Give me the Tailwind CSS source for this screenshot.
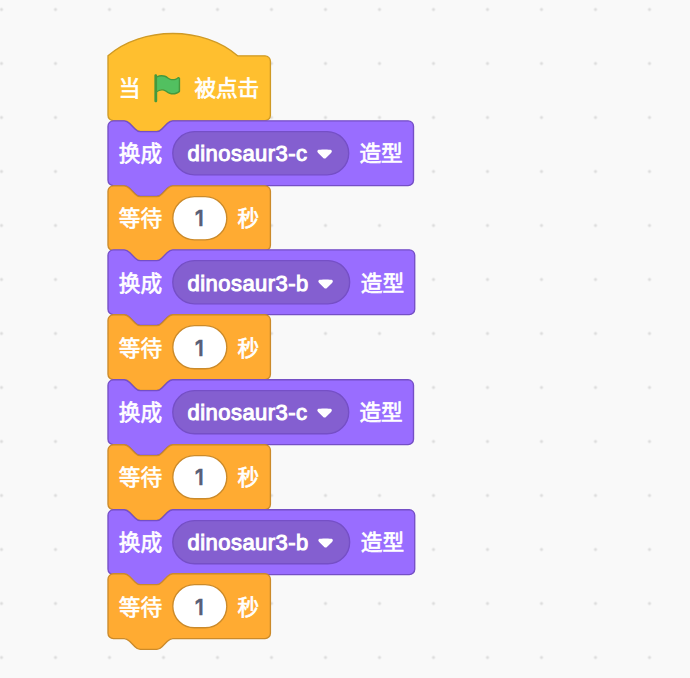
<!DOCTYPE html>
<html lang="zh-CN">
<head>
<meta charset="utf-8">
<title>积木</title>
<script src="https://cdn.jsdelivr.net/npm/@tailwindcss/browser@4"></script>
</head>
<body class="h-[678px] w-[690px] overflow-hidden bg-[#f9f9f9] bg-[radial-gradient(circle_at_center,#dddddd_1px,transparent_2px)] bg-[length:54px_54px] bg-[position:-25.5px_-17.5px] font-['Liberation_Sans','Noto_Sans_CJK_SC',sans-serif] text-[21.6px] leading-[32px] text-white [-webkit-text-stroke:0.7px_currentColor]">

<svg width="0" height="0" class="absolute">
  <defs>
    <path id="hat" d="M0,0c25,-22 71,-22 96,0H116.3a4,4 0 0 1 4,4v40a4,4 0 0 1 -4,4H48c-2,0 -3,1 -4,2l-4,4c-1,1 -2,2 -4,2h-12c-2,0 -3,-1 -4,-2l-4,-4c-1,-1 -2,-2 -4,-2H4a4,4 0 0 1 -4,-4z" fill="#ffbf2f" stroke="#cf9a25"/>
    <g id="wait">
      <path d="M0,4A4,4 0 0 1 4,0H12c2,0 3,1 4,2l4,4c1,1 2,2 4,2h12c2,0 3,-1 4,-2l4,-4c1,-1 2,-2 4,-2H116.3a4,4 0 0 1 4,4v40a4,4 0 0 1 -4,4H48c-2,0 -3,1 -4,2l-4,4c-1,1 -2,2 -4,2h-12c-2,0 -3,-1 -4,-2l-4,-4c-1,-1 -2,-2 -4,-2H4a4,4 0 0 1 -4,-4z" fill="#ffab32" stroke="#cb8a2a"/>
      <rect x="48" y="8" width="40" height="32" rx="16" fill="#fff" stroke="#cb8a2a"/>
    </g>
    <g id="costume-c" stroke="#754fc6">
      <path d="M0,4A4,4 0 0 1 4,0H12c2,0 3,1 4,2l4,4c1,1 2,2 4,2h12c2,0 3,-1 4,-2l4,-4c1,-1 2,-2 4,-2H222.3a4,4 0 0 1 4,4v40a4,4 0 0 1 -4,4H48c-2,0 -3,1 -4,2l-4,4c-1,1 -2,2 -4,2h-12c-2,0 -3,-1 -4,-2l-4,-4c-1,-1 -2,-2 -4,-2H4a4,4 0 0 1 -4,-4z" fill="#996dff"/>
      <rect x="48" y="8" width="130.3" height="32" rx="16" fill="#845fd0"/>
    </g>
    <g id="costume-b" stroke="#754fc6">
      <path d="M0,4A4,4 0 0 1 4,0H12c2,0 3,1 4,2l4,4c1,1 2,2 4,2h12c2,0 3,-1 4,-2l4,-4c1,-1 2,-2 4,-2H223.2a4,4 0 0 1 4,4v40a4,4 0 0 1 -4,4H48c-2,0 -3,1 -4,2l-4,4c-1,1 -2,2 -4,2h-12c-2,0 -3,-1 -4,-2l-4,-4c-1,-1 -2,-2 -4,-2H4a4,4 0 0 1 -4,-4z" fill="#996dff"/>
      <rect x="48" y="8" width="131" height="32" rx="16" fill="#845fd0"/>
    </g>
    <symbol id="arrow" viewBox="0 0 12.71 8.79">
      <path fill="#fff" d="M6.36,7.79a1.43,1.43,0,0,1-1-.42L1.42,3.45a1.44,1.44,0,0,1,0-2c.56-.56,9.31-.56,9.87,0a1.44,1.44,0,0,1,0,2L7.37,7.37A1.43,1.43,0,0,1,6.36,7.79Z"/>
    </symbol>
  </defs>
</svg>

<main class="flex flex-col pl-[108px] pt-[56px]">
  <section class="relative isolate flex h-[64.8px] items-center pl-[10.8px] pt-[1px]">
    <svg class="absolute left-0 top-0 -z-10 overflow-visible" width="163" height="65"><use href="#hat" transform="translate(0 -.2) scale(1.35)"/></svg>
    <span class="w-[32.4px] pt-px">当</span>
    <svg class="w-[32.4px] h-[32.4px] shrink-0 -translate-y-[0.8px]" viewBox="0 0 24 24">
      <path fill="#52c060" d="M3.6 3.7C6.5 2 9.9 2.1 12.5 4.2C15 6.2 17.9 6.1 20.4 4.2L21 4.7V14.3C18.3 16.5 14.4 16.5 11.6 14.4C9.2 12.6 6.6 12.6 3.6 14.4Z"/>
      <path fill="#45993d" d="M20.8 3.7c-.4-.2-.9-.1-1.2.2-2 1.6-4.8 1.6-6.8 0-2.3-1.9-5.6-2.3-8.3-1v-.4c0-.6-.5-1-1-1s-1 .4-1 1v18.8c0 .5.5 1 1 1h.1c.5 0 1-.4 1-1v-6.4c1-.7 2.1-1.2 3.4-1.3 1.2 0 2.4.4 3.4 1.2 2.9 2.3 7 2.3 9.8 0 .3-.2.4-.5.4-.9V4.7c0-.5-.3-.9-.8-1zm-.3 10.2C18 16 14.4 16 11.9 14c-1.1-.9-2.5-1.4-4-1.4-1.2.1-2.3.5-3.4 1.1V4c2.5-1.4 5.5-1.1 7.7.6 2.4 1.9 5.7 1.9 8.1 0h.2l.1.1-.1 9.2z"/>
    </svg>
    <span class="ml-[10.8px] pt-px">被点击</span>
  </section>

  <section class="relative isolate flex h-[64.8px] items-center pl-[10.8px] pt-[2px]">
    <svg class="absolute left-0 top-0 -z-10 overflow-visible" width="306" height="65"><use href="#costume-c" transform="translate(0 -.2) scale(1.35)"/></svg>
    <span class="w-[54px]">换成</span>
    <span class="flex w-[175.9px] items-center justify-between pl-[14.8px] pr-[15.9px]"><span class="text-[22px] tracking-[0.45px] [-webkit-text-stroke:1px_currentColor]">dinosaur3-c</span><svg class="h-[11.9px] w-[17.2px]"><use href="#arrow"/></svg></span>
    <span class="ml-[10.8px]">造型</span>
  </section>

  <section class="relative isolate flex h-[64.8px] items-center pl-[10.8px] pt-[2px]">
    <svg class="absolute left-0 top-0 -z-10 overflow-visible" width="163" height="65"><use href="#wait" transform="translate(0 -.2) scale(1.35)"/></svg>
    <span class="w-[54px]">等待</span>
    <span class="w-[53px] text-center font-[Inter,sans-serif] text-[21px] font-medium text-[#575e75]">1</span>
    <span class="ml-[11.8px]">秒</span>
  </section>

  <section class="relative isolate flex h-[64.8px] items-center pl-[10.8px] pt-[2px]">
    <svg class="absolute left-0 top-0 -z-10 overflow-visible" width="307" height="65"><use href="#costume-b" transform="translate(0 -.2) scale(1.35)"/></svg>
    <span class="w-[54px]">换成</span>
    <span class="flex w-[177.2px] items-center justify-between pl-[14.8px] pr-[15.9px]"><span class="text-[22px] tracking-[0.45px] [-webkit-text-stroke:1px_currentColor]">dinosaur3-b</span><svg class="h-[11.9px] w-[17.2px]"><use href="#arrow"/></svg></span>
    <span class="ml-[10.8px]">造型</span>
  </section>

  <section class="relative isolate flex h-[64.8px] items-center pl-[10.8px] pt-[2px]">
    <svg class="absolute left-0 top-0 -z-10 overflow-visible" width="163" height="65"><use href="#wait" transform="translate(0 -.2) scale(1.35)"/></svg>
    <span class="w-[54px]">等待</span>
    <span class="w-[53px] text-center font-[Inter,sans-serif] text-[21px] font-medium text-[#575e75]">1</span>
    <span class="ml-[11.8px]">秒</span>
  </section>

  <section class="relative isolate flex h-[64.8px] items-center pl-[10.8px] pt-[2px]">
    <svg class="absolute left-0 top-0 -z-10 overflow-visible" width="306" height="65"><use href="#costume-c" transform="translate(0 -.2) scale(1.35)"/></svg>
    <span class="w-[54px]">换成</span>
    <span class="flex w-[175.9px] items-center justify-between pl-[14.8px] pr-[15.9px]"><span class="text-[22px] tracking-[0.45px] [-webkit-text-stroke:1px_currentColor]">dinosaur3-c</span><svg class="h-[11.9px] w-[17.2px]"><use href="#arrow"/></svg></span>
    <span class="ml-[10.8px]">造型</span>
  </section>

  <section class="relative isolate flex h-[64.8px] items-center pl-[10.8px] pt-[2px]">
    <svg class="absolute left-0 top-0 -z-10 overflow-visible" width="163" height="65"><use href="#wait" transform="translate(0 -.2) scale(1.35)"/></svg>
    <span class="w-[54px]">等待</span>
    <span class="w-[53px] text-center font-[Inter,sans-serif] text-[21px] font-medium text-[#575e75]">1</span>
    <span class="ml-[11.8px]">秒</span>
  </section>

  <section class="relative isolate flex h-[64.8px] items-center pl-[10.8px] pt-[2px]">
    <svg class="absolute left-0 top-0 -z-10 overflow-visible" width="307" height="65"><use href="#costume-b" transform="translate(0 -.2) scale(1.35)"/></svg>
    <span class="w-[54px]">换成</span>
    <span class="flex w-[177.2px] items-center justify-between pl-[14.8px] pr-[15.9px]"><span class="text-[22px] tracking-[0.45px] [-webkit-text-stroke:1px_currentColor]">dinosaur3-b</span><svg class="h-[11.9px] w-[17.2px]"><use href="#arrow"/></svg></span>
    <span class="ml-[10.8px]">造型</span>
  </section>

  <section class="relative isolate flex h-[64.8px] items-center pl-[10.8px] pt-[2px]">
    <svg class="absolute left-0 top-0 -z-10 overflow-visible" width="163" height="65"><use href="#wait" transform="translate(0 -.2) scale(1.35)"/></svg>
    <span class="w-[54px]">等待</span>
    <span class="w-[53px] text-center font-[Inter,sans-serif] text-[21px] font-medium text-[#575e75]">1</span>
    <span class="ml-[11.8px]">秒</span>
  </section>
</main>
</body>
</html>
